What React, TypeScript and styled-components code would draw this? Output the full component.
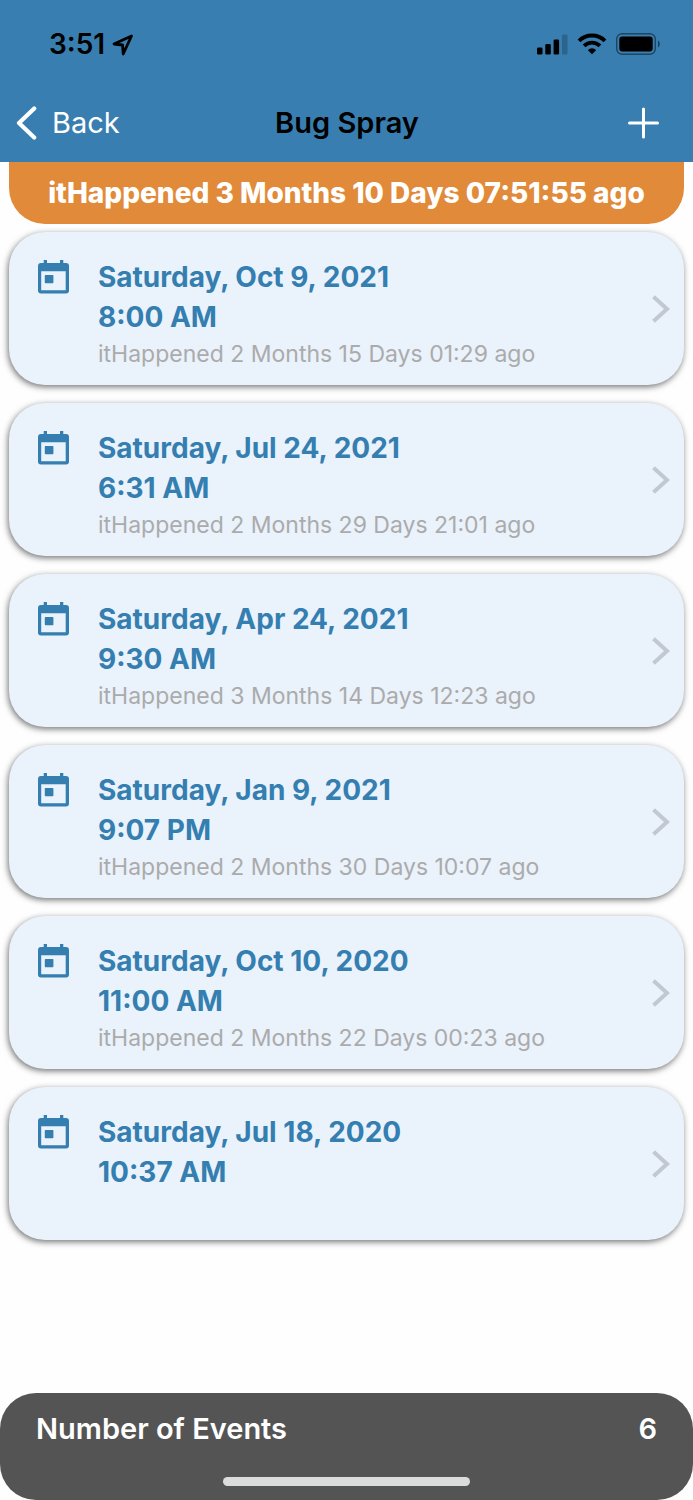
import React from "react";
import styled, { createGlobalStyle } from "styled-components";

const GlobalStyle = createGlobalStyle`
  *, *::before, *::after { box-sizing: border-box; }
  body {
    margin: 0;
    background: #fefefe;
    font-family: Inter, "Liberation Sans", sans-serif;
  }
`;

const Page = styled.div`
  display: flex;
  flex-direction: column;
  min-height: 100vh;
`;

const Header = styled.header`
  background: #387eb0;
  color: #000;
`;

const StatusBar = styled.div`
  display: flex;
  align-items: center;
  justify-content: space-between;
  height: 84px;
  padding: 4px 33px 0 49px;
`;

const StatusGroup = styled.div<{ $gap: number }>`
  display: flex;
  align-items: center;
  gap: ${(p) => p.$gap}px;
`;

const Clock = styled.time`
  font-size: 28px;
  line-height: 32px;
  font-weight: 600;
`;

const NavBar = styled.nav`
  display: grid;
  grid-template-columns: 1fr auto 1fr;
  align-items: center;
  height: 78px;
  padding: 0 33px 0 16px;
`;

const NavButton = styled.button<{ $end?: boolean }>`
  display: flex;
  align-items: center;
  justify-self: ${(p) => (p.$end ? "end" : "start")};
  gap: 15px;
  padding: 0;
  border: 0;
  background: none;
  color: #fff;
  font-family: inherit;
  font-size: 29px;
  line-height: 40px;
  cursor: pointer;
`;

const Title = styled.h1`
  margin: 0 -9px 0 9px;
  font-size: 29px;
  line-height: 40px;
  font-weight: 600;
`;

const Banner = styled.p`
  margin: 0 9px;
  height: 62px;
  border-radius: 0 0 36px 36px;
  background: #e18a39;
  color: #fff;
  font-size: 28px;
  line-height: 62px;
  font-weight: 800;
  text-align: center;
  white-space: nowrap;
`;

const EventList = styled.ul`
  flex: 1;
  display: flex;
  flex-direction: column;
  gap: 18px;
  margin: 0;
  padding: 8px 9px 24px;
  list-style: none;
`;

const EventCard = styled.a`
  display: flex;
  align-items: flex-start;
  min-height: 153px;
  padding: 25px 14px 14px 29px;
  border-radius: 36px;
  background: #eaf2fc;
  box-shadow: -1px 2px 6px rgba(0, 0, 0, 0.55);
  color: #347eb0;
  text-decoration: none;
`;

const CalendarSlot = styled.span`
  display: flex;
  padding-top: 3px;
`;

const EventBody = styled.span`
  flex: 1;
  display: flex;
  flex-direction: column;
  margin-left: 29px;
`;

const EventWhen = styled.strong`
  font-size: 28px;
  line-height: 40px;
  font-weight: 700;
`;

const EventAgo = styled.span`
  color: #ababab;
  font-size: 23px;
  line-height: 34px;
`;

const ChevronSlot = styled.span`
  display: flex;
  align-self: center;
  padding-bottom: 10px;
`;

const Footer = styled.footer`
  display: flex;
  flex-direction: column;
  justify-content: space-between;
  height: 107px;
  padding: 16px 36px 14px;
  border-radius: 36px;
  background: #545454;
  color: #fff;
`;

const Total = styled.div`
  display: flex;
  justify-content: space-between;
  font-size: 29px;
  line-height: 40px;
  font-weight: 600;
`;

const HomeIndicator = styled.div`
  align-self: center;
  width: 247px;
  height: 9px;
  border-radius: 5px;
  background: #dcdcdc;
`;

const LocationIcon = () => (
  <svg width="22" height="24" viewBox="0 0 22 24" aria-hidden="true">
    <path d="M19.500 4 L2 12 L10.600 13 L11.200 22 Z" fill="none" stroke="#000" strokeWidth="2.800" strokeLinejoin="round" />
  </svg>
);

const SignalIcon = () => (
  <svg width="31" height="21" viewBox="0 0 31 21" aria-hidden="true">
    <rect x="0" y="13.500" width="5.500" height="7" rx="1.300" />
    <rect x="8.300" y="10" width="5.500" height="10.500" rx="1.300" />
    <rect x="16.600" y="5.500" width="5.500" height="15" rx="1.300" />
    <rect x="25" y="0.500" width="5.500" height="20" rx="1.300" opacity="0.200" />
  </svg>
);

const WifiIcon = () => (
  <svg width="30" height="22" viewBox="0 0 30 22" aria-hidden="true">
    <g fill="none" stroke="#000" strokeWidth="3.900">
      <path d="M2 7.800 A18.500 18.500 0 0 1 28 7.800" />
      <path d="M7 12.900 A11.500 11.500 0 0 1 23 12.900" />
    </g>
    <path d="M10.800 17 A6.500 6.500 0 0 1 19.200 17 L15 21.300 Z" />
  </svg>
);

const BatteryIcon = () => (
  <svg width="44" height="22" viewBox="0 0 44 22" aria-hidden="true">
    <rect x="0.700" y="0.700" width="38.600" height="20.600" rx="5.500" fill="none" stroke="#000" strokeWidth="1.400" opacity="0.450" />
    <rect x="3.300" y="3.600" width="33.400" height="14.800" rx="2.800" />
    <path d="M42 7.500 C44.300 8.500 44.300 13.500 42 14.500 Z" opacity="0.500" />
  </svg>
);

const BackIcon = () => (
  <svg width="21" height="34" viewBox="0 0 21 34" aria-hidden="true">
    <path d="M18.200 2.500 L3 17 L18.200 31.500" fill="none" stroke="#fff" strokeWidth="4.200" strokeLinecap="round" strokeLinejoin="round" />
  </svg>
);

const PlusIcon = () => (
  <svg width="33" height="32" viewBox="0 0 33 32" aria-hidden="true">
    <path d="M2.500 16 H30.500 M16.500 2 V30" fill="none" stroke="#fff" strokeWidth="3" strokeLinecap="round" />
  </svg>
);

const CalendarIcon = () => (
  <svg width="31" height="34" viewBox="0 0 31 34" aria-hidden="true">
    <path
      fill="#347eb0"
      fillRule="evenodd"
      d="M5.700 0 H9 V3 H22 V0 H25.300 V3 H28 Q31 3 31 6 V30.500 Q31 33.500 28 33.500 H3 Q0 33.500 0 30.500 V6 Q0 3 3 3 H5.700 Z M3.200 11.200 V30.200 H27.700 V11.200 Z M7.500 15 H14.700 Q15.400 15 15.400 15.700 V22.500 Q15.400 23.200 14.700 23.200 H7.500 Q6.800 23.200 6.800 22.500 V15.700 Q6.800 15 7.500 15 Z"
    />
  </svg>
);

const ChevronIcon = () => (
  <svg width="19" height="28" viewBox="0 0 19 28" aria-hidden="true">
    <path d="M2.500 1.800 L16 14 L2.500 26.200" fill="none" stroke="#c2c8d2" strokeWidth="4" />
  </svg>
);

type EventEntry = { date: string; time: string; ago?: string };

const events: EventEntry[] = [
  { date: "Saturday, Oct 9, 2021", time: "8:00 AM", ago: "itHappened 2 Months 15 Days 01:29 ago" },
  { date: "Saturday, Jul 24, 2021", time: "6:31 AM", ago: "itHappened 2 Months 29 Days 21:01 ago" },
  { date: "Saturday, Apr 24, 2021", time: "9:30 AM", ago: "itHappened 3 Months 14 Days 12:23 ago" },
  { date: "Saturday, Jan 9, 2021", time: "9:07 PM", ago: "itHappened 2 Months 30 Days 10:07 ago" },
  { date: "Saturday, Oct 10, 2020", time: "11:00 AM", ago: "itHappened 2 Months 22 Days 00:23 ago" },
  { date: "Saturday, Jul 18, 2020", time: "10:37 AM" },
];

export default function App() {
  return (
    <Page>
      <GlobalStyle />
      <Header>
        <StatusBar>
          <StatusGroup $gap={7}>
            <Clock>3:51</Clock>
            <LocationIcon />
          </StatusGroup>
          <StatusGroup $gap={9}>
            <SignalIcon />
            <WifiIcon />
            <BatteryIcon />
          </StatusGroup>
        </StatusBar>
        <NavBar>
          <NavButton type="button">
            <BackIcon />
            Back
          </NavButton>
          <Title>Bug Spray</Title>
          <NavButton type="button" aria-label="Add event" $end>
            <PlusIcon />
          </NavButton>
        </NavBar>
      </Header>
      <Banner>itHappened 3 Months 10 Days 07:51:55 ago</Banner>
      <EventList>
        {events.map((event) => (
          <li key={event.date}>
            <EventCard href="#">
              <CalendarSlot>
                <CalendarIcon />
              </CalendarSlot>
              <EventBody>
                <EventWhen>{event.date}</EventWhen>
                <EventWhen>{event.time}</EventWhen>
                {event.ago && <EventAgo>{event.ago}</EventAgo>}
              </EventBody>
              <ChevronSlot>
                <ChevronIcon />
              </ChevronSlot>
            </EventCard>
          </li>
        ))}
      </EventList>
      <Footer>
        <Total>
          <span>Number of Events</span>
          <span>{events.length}</span>
        </Total>
        <HomeIndicator />
      </Footer>
    </Page>
  );
}
